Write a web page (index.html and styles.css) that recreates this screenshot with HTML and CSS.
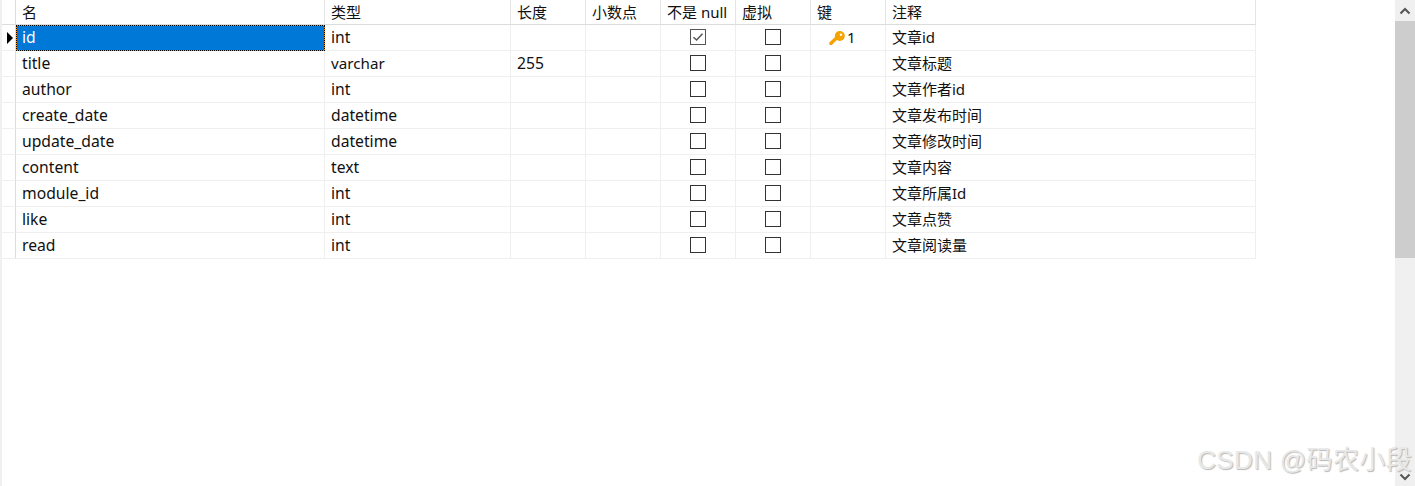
FILE: index.html
```html
<!DOCTYPE html>
<html lang="zh">
<head>
<meta charset="utf-8">
<title>表设计</title>
<link rel="stylesheet" href="styles.css">
</head>
<body>
<div class="app">
  <div class="strip"></div>
  <main class="pane">
    <div class="grid">
      <div class="row head">
        <div class="cell ind"></div>
        <div class="cell">名</div><div class="cell">类型</div><div class="cell">长度</div><div class="cell">小数点</div><div class="cell">不是 null</div><div class="cell">虚拟</div><div class="cell">键</div><div class="cell">注释</div>
      </div>
      <div class="row">
        <div class="cell ind"><span class="arrow"></span></div>
        <div class="cell lat selected">id</div><div class="cell lat">int</div><div class="cell"></div><div class="cell"></div>
        <div class="cell chk"><span class="box on"><svg viewBox="0 0 14 14" width="14" height="14"><path d="M2.500 7.200 5.600 10 11.500 3.800" fill="none" stroke="#555" stroke-width="1.500"/></svg></span></div>
        <div class="cell chk"><span class="box"></span></div>
        <div class="cell keycell"><svg class="key" viewBox="0 0 16 14" width="16" height="14"><path d="M1.800 12.400 7 7.400" stroke="#f5a300" stroke-width="3.400" stroke-linecap="round" fill="none"/><circle cx="10.800" cy="5" r="5" fill="#f5a300"/><circle cx="12" cy="3.800" r="1.200" fill="#fff"/></svg><span>1</span></div>
        <div class="cell">文章id</div>
      </div>
      <div class="row">
        <div class="cell ind"></div><div class="cell lat">title</div><div class="cell lat varchar">varchar</div><div class="cell lat">255</div><div class="cell"></div>
        <div class="cell chk"><span class="box"></span></div><div class="cell chk"><span class="box"></span></div><div class="cell"></div><div class="cell">文章标题</div>
      </div>
      <div class="row">
        <div class="cell ind"></div><div class="cell lat">author</div><div class="cell lat">int</div><div class="cell"></div><div class="cell"></div>
        <div class="cell chk"><span class="box"></span></div><div class="cell chk"><span class="box"></span></div><div class="cell"></div><div class="cell">文章作者id</div>
      </div>
      <div class="row">
        <div class="cell ind"></div><div class="cell lat">create_date</div><div class="cell lat">datetime</div><div class="cell"></div><div class="cell"></div>
        <div class="cell chk"><span class="box"></span></div><div class="cell chk"><span class="box"></span></div><div class="cell"></div><div class="cell">文章发布时间</div>
      </div>
      <div class="row">
        <div class="cell ind"></div><div class="cell lat">update_date</div><div class="cell lat">datetime</div><div class="cell"></div><div class="cell"></div>
        <div class="cell chk"><span class="box"></span></div><div class="cell chk"><span class="box"></span></div><div class="cell"></div><div class="cell">文章修改时间</div>
      </div>
      <div class="row">
        <div class="cell ind"></div><div class="cell lat">content</div><div class="cell lat">text</div><div class="cell"></div><div class="cell"></div>
        <div class="cell chk"><span class="box"></span></div><div class="cell chk"><span class="box"></span></div><div class="cell"></div><div class="cell">文章内容</div>
      </div>
      <div class="row">
        <div class="cell ind"></div><div class="cell lat">module_id</div><div class="cell lat">int</div><div class="cell"></div><div class="cell"></div>
        <div class="cell chk"><span class="box"></span></div><div class="cell chk"><span class="box"></span></div><div class="cell"></div><div class="cell">文章所属Id</div>
      </div>
      <div class="row">
        <div class="cell ind"></div><div class="cell lat">like</div><div class="cell lat">int</div><div class="cell"></div><div class="cell"></div>
        <div class="cell chk"><span class="box"></span></div><div class="cell chk"><span class="box"></span></div><div class="cell"></div><div class="cell">文章点赞</div>
      </div>
      <div class="row">
        <div class="cell ind"></div><div class="cell lat">read</div><div class="cell lat">int</div><div class="cell"></div><div class="cell"></div>
        <div class="cell chk"><span class="box"></span></div><div class="cell chk"><span class="box"></span></div><div class="cell"></div><div class="cell">文章阅读量</div>
      </div>
    </div>
    <div class="watermark">CSDN @码农小段</div>
  </main>
  <aside class="scrollbar">
    <div class="sb-btn"><svg viewBox="0 0 20 21" width="20" height="21"><path d="M5.500 13.500 10 9l4.500 4.500" fill="none" stroke="#555" stroke-width="2"/></svg></div>
    <div class="sb-thumb"></div>
    <div class="sb-track"></div>
    <div class="sb-btn"><svg viewBox="0 0 20 16" width="20" height="16"><path d="M5.500 4.500 10 9l4.500-4.500" fill="none" stroke="#555" stroke-width="2"/></svg></div>
  </aside>
</div>
</body>
</html>
```
FILE: styles.css
```css
* { box-sizing: border-box; }
html, body { margin: 0; height: 100%; overflow: hidden; background: #fff; }
body {
  font-family: "Noto Sans", "Noto Sans CJK SC", sans-serif;
  font-size: 15px;
  color: #111;
}
.app { display: flex; height: 486px; width: 1415px; }
.strip { width: 2px; background: #f0f0f0; flex: none; }
.pane { flex: 1; position: relative; min-width: 0; }
.grid { width: 1254px; }
.row {
  display: grid;
  grid-template-columns: 14px 309px 186px 75px 75px 75px 75px 75px 370px;
  height: 26px;
}
.row.head { height: 25px; }
.cell {
  display: flex;
  align-items: center;
  padding-left: 6px;
  border-right: 1px solid #efefef;
  border-bottom: 1px solid #efefef;
  white-space: nowrap;
  overflow: hidden;
  line-height: 1;
}
.cell.lat { font-size: 15.7px; }
.cell.varchar { font-size: 15.2px; }
.head .cell { border-right-color: #e4e4e4; border-bottom-color: #dcdcdc; }
.cell.ind { padding-left: 5px; border-right-color: #dcdcdc; }
.arrow {
  width: 0; height: 0;
  border-left: 6px solid #000;
  border-top: 6px solid transparent;
  border-bottom: 6px solid transparent;
}
.cell.selected {
  --dots-x: repeating-linear-gradient(90deg, #000 0 1px, #f58a1f 1px 2px);
  --dots-y: repeating-linear-gradient(0deg, #000 0 1px, #f58a1f 1px 2px);
  color: #fff;
  border: 0;
  padding: 0 1px 1px 6px;
  background:
    var(--dots-x) top / 100% 1px no-repeat,
    var(--dots-x) bottom / 100% 1px no-repeat,
    var(--dots-y) left / 1px 100% no-repeat,
    var(--dots-y) right / 1px 100% no-repeat,
    #0078d7;
}
.cell.chk { justify-content: center; padding: 0 1px 1px 0; }
.box {
  width: 16px; height: 16px;
  border: 1px solid #333;
  background: #fff;
  display: flex;
  align-items: center;
  justify-content: center;
}
.box.on { border-color: #555; }
.cell.keycell { padding-left: 18px; gap: 2px; }
.scrollbar {
  width: 20px;
  flex: none;
  background: #f0f0f0;
  display: flex;
  flex-direction: column;
}
.sb-btn { flex: none; display: block; line-height: 0; }
.sb-thumb { height: 237px; flex: none; background: #cdcdcd; }
.sb-track { flex: 1; }
.watermark {
  position: absolute;
  right: -17px;
  bottom: 11px;
  font-family: "Liberation Sans", "Noto Sans CJK SC", sans-serif;
  font-size: 26px;
  letter-spacing: 0.35px;
  color: #e8e8e8;
  text-shadow: 1px 1px 1px #b8b8b8;
  white-space: nowrap;
  line-height: 30px;
}
```
